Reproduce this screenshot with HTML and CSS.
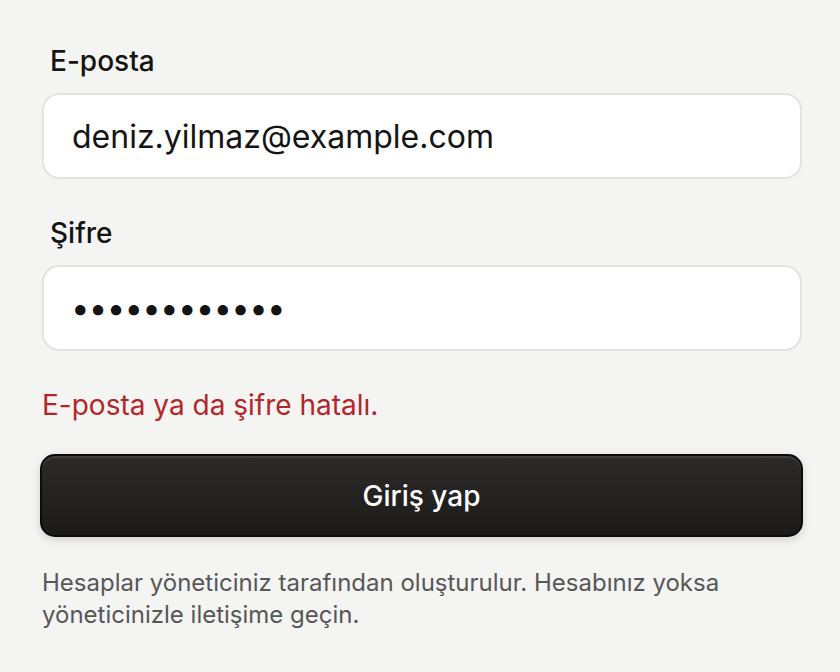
FILE: index.html
```html
<!DOCTYPE html>
<html lang="tr">
<head>
<meta charset="utf-8">
<title>Giriş</title>
<link rel="stylesheet" href="styles.css">
</head>
<body>
<form class="login" onsubmit="return false">
  <div class="field">
    <label class="label" for="email">E-posta</label>
    <input class="input" id="email" type="email" value="deniz.yilmaz@example.com">
  </div>
  <div class="field field-gap">
    <label class="label" for="password">Şifre</label>
    <input class="input input-password" id="password" type="password" value="gizlisifre12">
  </div>
  <p class="error">E-posta ya da şifre hatalı.</p>
  <button class="submit" type="submit">Giriş yap</button>
  <p class="note">Hesaplar yöneticiniz tarafından oluşturulur. Hesabınız yoksa yöneticinizle iletişime geçin.</p>
</form>
</body>
</html>
```

FILE: styles.css
```css
* { box-sizing: border-box; }
html, body { margin: 0; padding: 0; }
body {
  background: #f4f4f3;
  font-family: Inter, "Noto Sans", sans-serif;
  color: #111;
}
.login {
  display: flex;
  flex-direction: column;
  padding: 45px 38px 0 42px;
}
.field {
  display: flex;
  flex-direction: column;
  gap: 16px;
}
.field-gap { margin-top: 38px; }
.label {
  font-size: 28px;
  line-height: 32px;
  font-weight: 500;
  color: #141414;
  padding-left: 8px;
}
.input {
  height: 86px;
  width: 100%;
  border: 2px solid #e3e3e1;
  border-radius: 17px;
  background: #fff;
  padding: 0 28px;
  font-family: Inter, "Noto Sans", sans-serif;
  font-size: 32px;
  color: #141414;
  outline: none;
}
.input-password {
  font-size: 33px;
  letter-spacing: -0.75px;
  padding-left: 27px;
}
.error {
  margin: 38px 0 0;
  font-size: 28px;
  line-height: 32px;
  color: #b3262a;
}
.submit {
  margin: 33px -1px 0 -2px;
  height: 83px;
  border: 2px solid #0c0b0b;
  border-radius: 15px;
  background: linear-gradient(#2c2a29, #1c1b1a);
  box-shadow: inset 0 2px 0 rgba(255,255,255,0.1), 0 3px 8px rgba(0,0,0,0.15);
  color: #fff;
  font-family: Inter, "Noto Sans", sans-serif;
  font-size: 28px;
  font-weight: 500;
}
.note {
  margin: 30px 0 0;
  font-size: 24px;
  line-height: 32px;
  color: #575757;
}
```
